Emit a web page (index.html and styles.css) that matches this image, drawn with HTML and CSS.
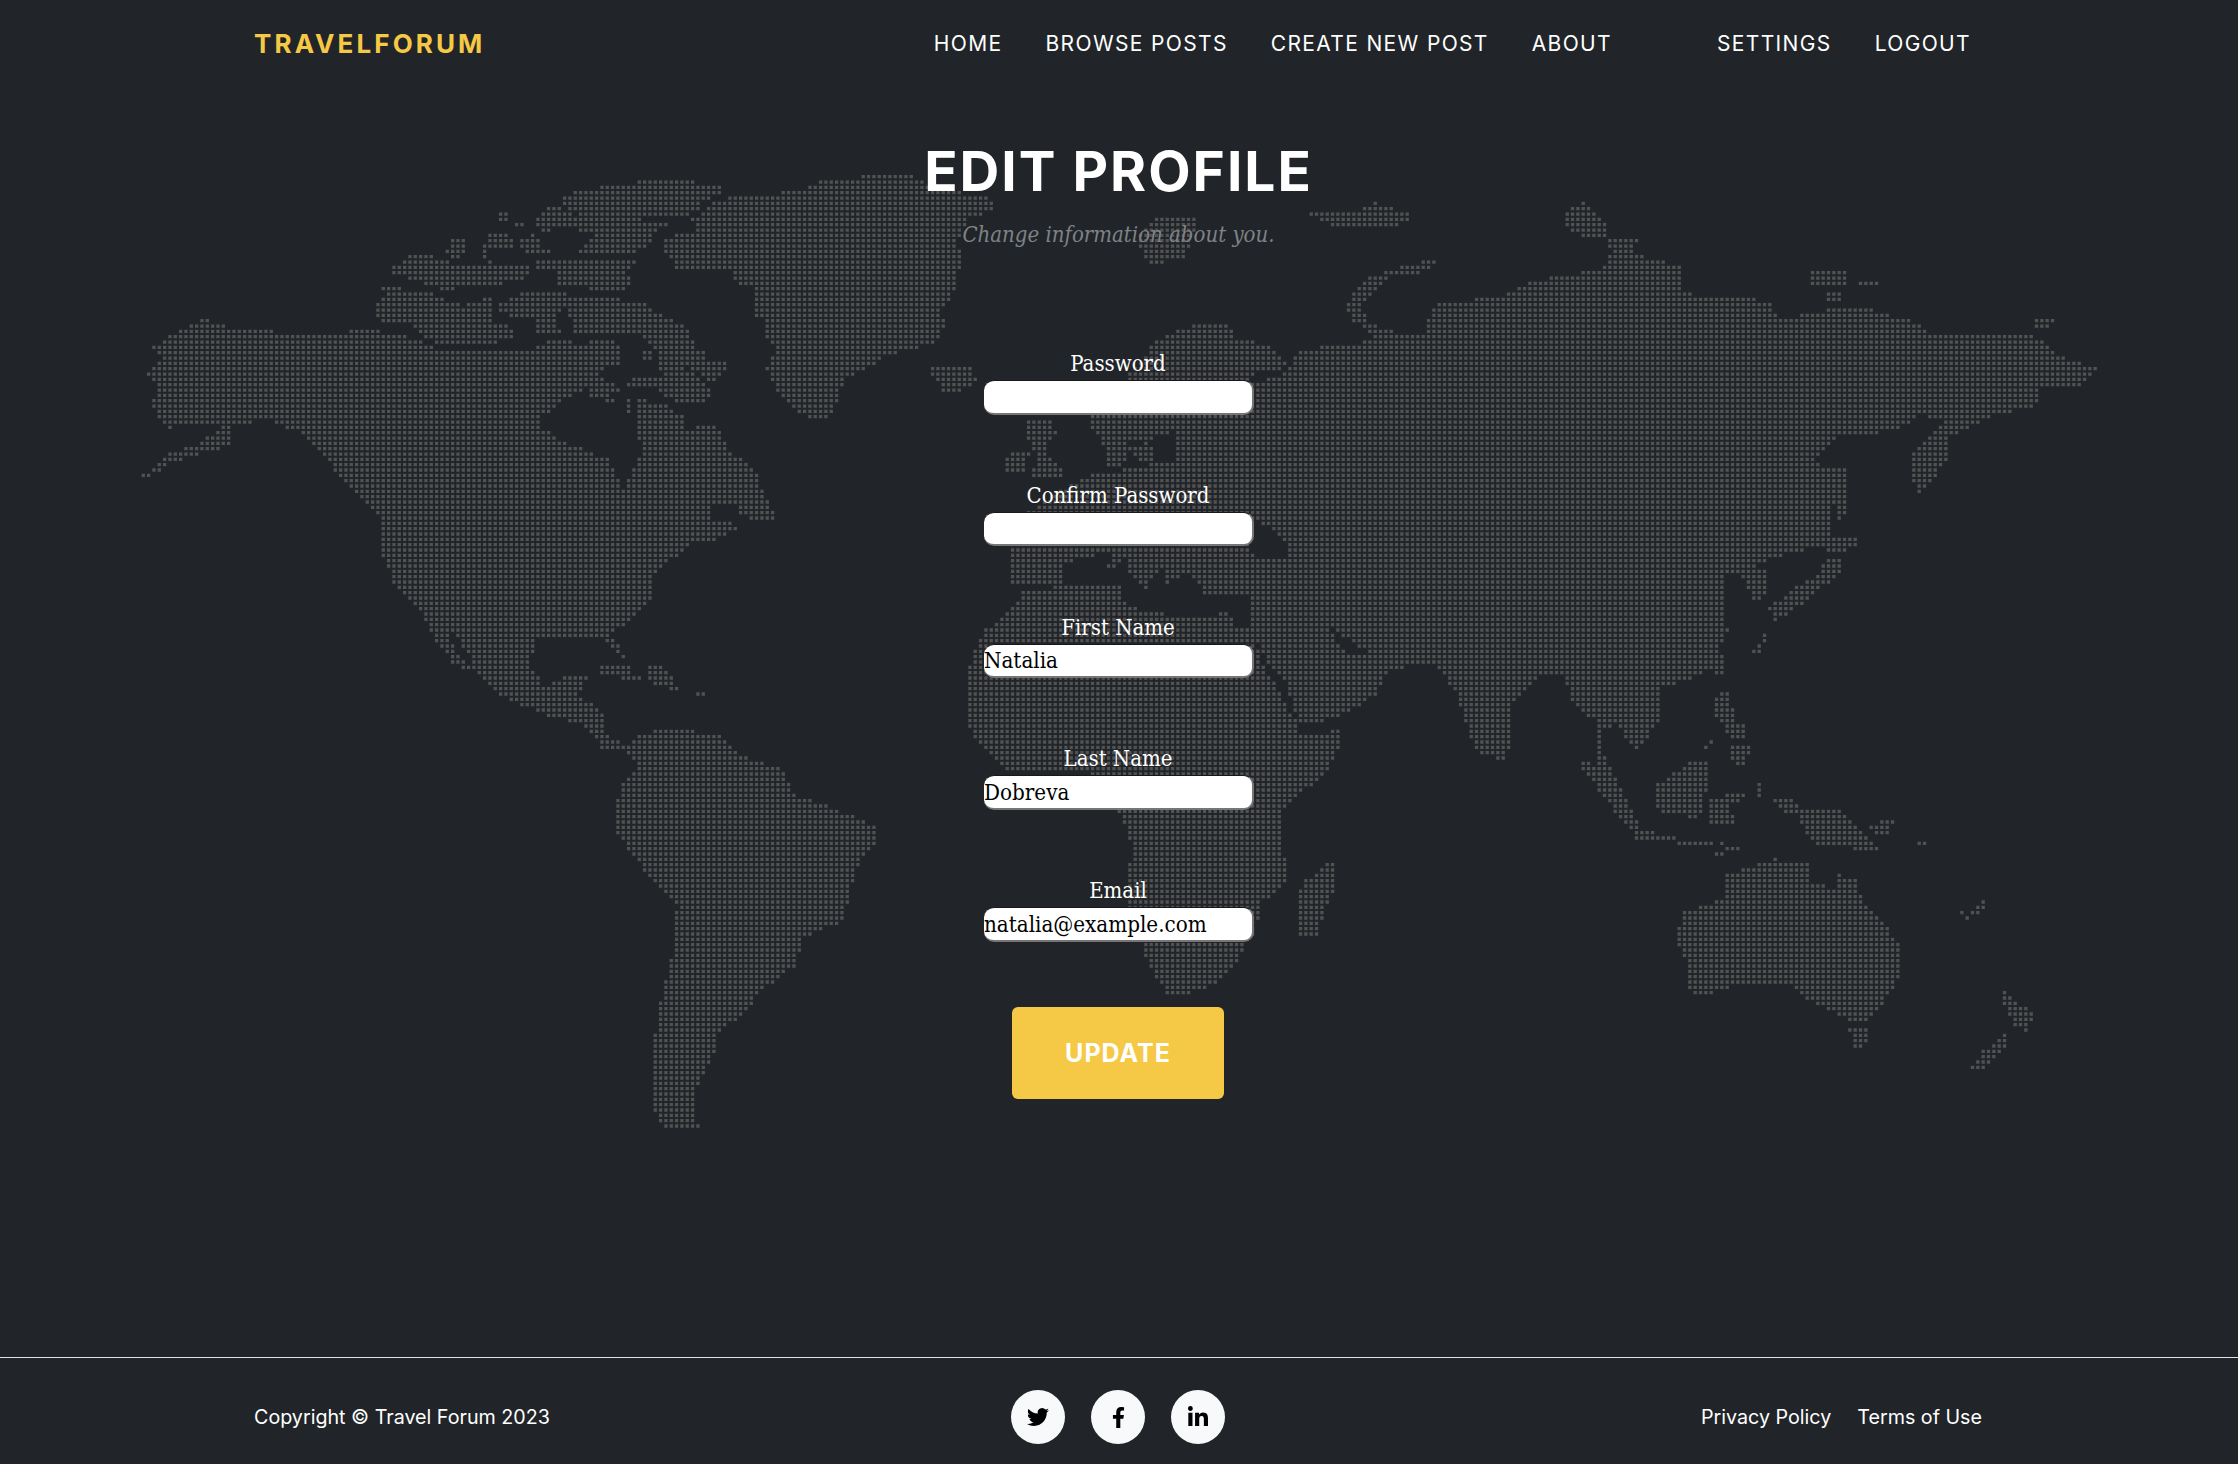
FILE: index.html
```html
<!DOCTYPE html>
<html lang="en">
<head>
<meta charset="utf-8">
<title>Edit Profile - Travel Forum</title>
<link rel="stylesheet" href="styles.css">
</head>
<body>
<svg class="world-map" id="world-map" width="2238" height="1464" viewBox="0 0 2238 1464" aria-hidden="true"><path id="world-dots" class="world-dots"></path></svg>
<header class="site-header">
  <a class="brand" href="#">TRAVELFORUM</a>
  <nav class="nav">
    <div class="nav-group">
      <a href="#">HOME</a>
      <a href="#">BROWSE POSTS</a>
      <a href="#">CREATE NEW POST</a>
      <a href="#">ABOUT</a>
    </div>
    <div class="nav-group">
      <a href="#">SETTINGS</a>
      <a href="#">LOGOUT</a>
    </div>
  </nav>
</header>
<main class="content">
  <h1 class="title">EDIT PROFILE</h1>
  <p class="subtitle">Change information about you.</p>
  <form class="profile-form">
    <div class="field"><label for="password">Password</label><input id="password" type="password"></div>
    <div class="field"><label for="confirm">Confirm Password</label><input id="confirm" type="password"></div>
    <div class="field"><label for="first">First Name</label><input id="first" type="text" value="Natalia"></div>
    <div class="field"><label for="last">Last Name</label><input id="last" type="text" value="Dobreva"></div>
    <div class="field"><label for="email">Email</label><input id="email" type="text" value="natalia@example.com"></div>
    <button class="submit" type="button">UPDATE</button>
  </form>
</main>
<footer class="site-footer">
  <div class="footer-inner">
    <p class="copyright">Copyright © Travel Forum 2023</p>
    <div class="socials">
      <a class="social" href="#" aria-label="Twitter"><svg class="icon-tw" viewBox="0 0 24 24"><path d="M23.953 4.57a10 10 0 01-2.825.775 4.958 4.958 0 002.163-2.723c-.951.555-2.005.959-3.127 1.184a4.92 4.92 0 00-8.384 4.482C7.69 8.095 4.067 6.13 1.64 3.162a4.822 4.822 0 00-.666 2.475c0 1.71.87 3.213 2.188 4.096a4.904 4.904 0 01-2.228-.616v.06a4.923 4.923 0 003.946 4.827 4.996 4.996 0 01-2.212.085 4.936 4.936 0 004.604 3.417 9.867 9.867 0 01-6.102 2.105c-.39 0-.779-.023-1.17-.067a13.995 13.995 0 007.557 2.209c9.053 0 13.998-7.496 13.998-13.985 0-.21 0-.42-.015-.63A9.935 9.935 0 0024 4.59z"/></svg></a>
      <a class="social" href="#" aria-label="Facebook"><svg class="icon-fb" viewBox="0 0 320 512"><path d="M279.14 288l14.22-92.66h-88.91v-60.13c0-25.35 12.42-50.06 52.24-50.06h40.42V6.26S260.43 0 225.36 0c-73.22 0-121.08 44.38-121.08 124.72v70.62H22.89V288h81.39v224h100.17V288z"/></svg></a>
      <a class="social" href="#" aria-label="LinkedIn"><svg class="icon-in" viewBox="0 0 448 512"><path d="M100.28 448H7.4V148.9h92.88zM53.79 108.1C24.09 108.1 0 83.5 0 53.8a53.79 53.79 0 0 1 107.58 0c0 29.7-24.1 54.3-53.79 54.3zM447.9 448h-92.68V302.4c0-34.7-.7-79.2-48.29-79.2-48.29 0-55.69 37.7-55.69 76.7V448h-92.78V148.9h89.08v40.8h1.3c12.4-23.5 42.69-48.3 87.88-48.3 94 0 111.28 61.9 111.28 142.3V448z"/></svg></a>
    </div>
    <div class="legal"><a href="#">Privacy Policy</a><a href="#">Terms of Use</a></div>
  </div>
</footer>
<script src="map.js"></script>
</body>
</html>
```
FILE: styles.css
```css
* { box-sizing: border-box; }
html, body { margin: 0; padding: 0; }
body {
  position: relative;
  min-height: 1464px;
  display: flex;
  flex-direction: column;
  background: #212529;
  color: #fff;
  font-family: Inter, "Liberation Sans", sans-serif;
  overflow: hidden;
}
a { color: inherit; text-decoration: none; }

.world-map { position: absolute; left: 0; top: 0; z-index: 0; filter: blur(0.45px); }
.world-dots { fill: #525252; }

.site-header, .content, .site-footer { position: relative; z-index: 1; }

.site-header {
  display: flex;
  align-items: center;
  height: 86px;
  padding: 0 267px 0 254px;
}
.brand {
  color: #f5c945;
  font-size: 26px;
  font-weight: 700;
  letter-spacing: 3.1px;
}
.nav {
  margin-left: auto;
  display: flex;
  gap: 105px;
  font-size: 21px;
  letter-spacing: 1.35px;
  font-weight: 400;
}
.nav-group { display: flex; gap: 43px; }

.content {
  flex: 1;
  display: flex;
  flex-direction: column;
  align-items: center;
}
.title {
  margin: 53px 1px 0 0;
  font-size: 55px;
  line-height: 64px;
  font-weight: 700;
  letter-spacing: 2px;
}
.subtitle {
  margin: 16px 1px 0 0;
  font-family: "DejaVu Serif Condensed", "DejaVu Serif", serif;
  font-stretch: condensed;
  font-style: italic;
  font-size: 22px;
  line-height: 32px;
  color: #7f8286;
}
.profile-form {
  width: 270px;
  margin-top: 96px;
  display: flex;
  flex-direction: column;
  align-items: flex-start;
  font-family: "DejaVu Serif Condensed", "DejaVu Serif", serif;
  font-stretch: condensed;
}
.field {
  width: 100%;
  height: 131.75px;
  display: flex;
  flex-direction: column;
  align-items: center;
}
.field label { font-size: 22px; line-height: 33px; margin-right: 2px; }
.field input {
  width: 100%;
  height: 34.5px;
  padding: 0;
  border-style: solid;
  border-width: 1px 2px 2px 0;
  border-color: #16181b #767676 #767676;
  border-radius: 10px;
  background: #fff;
  color: #000;
  font: inherit;
  font-size: 22.2px;
  outline: none;
}
.submit {
  width: 212px;
  height: 92px;
  margin: 1px 0 0 28px;
  border: 0;
  border-radius: 6px;
  background: #f5c945;
  color: #fff;
  font-family: Inter, "Liberation Sans", sans-serif;
  font-size: 25px;
  font-weight: 700;
  letter-spacing: 1px;
}

.site-footer { border-top: 1px solid #dee2e6; height: 107px; }
.footer-inner {
  height: 100%;
  padding: 12px 256px 0 254px;
  display: grid;
  grid-template-columns: 1fr auto 1fr;
  align-items: center;
  font-size: 19.7px;
}
.copyright { margin: 0; }
.socials { display: flex; gap: 26px; }
.social {
  width: 54px;
  height: 54px;
  border-radius: 50%;
  background: #f8f9fa;
  display: flex;
  align-items: center;
  justify-content: center;
}
.social svg { fill: #000; display: block; }
.icon-tw { width: 22px; height: 22px; }
.icon-fb { width: 13px; height: 21px; }
.icon-in { width: 20px; height: 23px; }
.legal { display: flex; justify-content: flex-end; gap: 26px; }
```
FILE: map.js
```js
// Dotted world map: land outlines traced per region, rasterised onto a 5.33px dot grid.
var PITCH = 5.333, DOT = 3.3, OX = 159.3, OY = 320.7;

// Each region: origin, scale, polygons as flat x,y lists.
var LAND = [
  { o: [130, 170], s: [1.568, 1.6], p: [
    // North America
    [28,328,50,300,38,285,70,262,120,240,150,252,210,258,265,268,310,268,361,256,431,267,482,288,617,293,661,272,713,280,757,277,764,309,719,320,716,347,668,373,645,395,645,416,693,443,751,464,757,490,777,512,796,464,802,453,796,373,834,373,866,397,869,421,905,405,927,421,937,448,985,485,988,512,1010,550,1005,565,960,550,955,530,915,530,910,560,945,565,950,575,910,595,880,590,860,615,835,630,815,660,815,690,780,725,750,740,770,770,775,785,760,770,745,745,640,745,625,790,650,830,680,815,720,810,700,840,745,870,745,900,775,925,740,925,720,890,670,875,640,865,590,845,550,810,510,780,480,750,460,710,420,670,395,610,395,560,360,520,330,490,300,450,270,420,210,395,160,410,160,440,110,450,60,470,15,495,60,455,100,445,130,425,150,405,60,410,35,380,50,345],
    // South America
    [775,925,800,905,850,895,920,905,960,940,1020,960,1040,1000,1120,1030,1165,1050,1165,1080,1140,1110,1115,1200,1050,1230,1045,1270,980,1320,960,1355,925,1370,915,1410,880,1480,880,1525,900,1535,840,1535,820,1500,820,1430,830,1340,850,1270,860,1180,800,1110,760,1050,770,990,800,950],
    // Caribbean and Baja
    [735,796,780,796,795,812,865,835,820,818,735,806],[815,795,835,795,850,810,850,830,815,818],[885,838,900,838,900,843,885,843],
    [470,725,490,740,525,795,510,790,480,750]
  ]},
  { o: [360, 170], s: [2.45, 3], p: [
    // Greenland
    [885,90,1035,75,1040,60,1090,60,1100,45,1190,30,1300,15,1340,10,1380,40,1430,60,1550,90,1550,120,1490,140,1475,170,1460,215,1470,275,1455,350,1440,395,1420,420,1430,470,1415,510,1350,535,1285,550,1265,575,1190,620,1175,665,1150,735,1135,750,1075,730,1030,670,1000,600,1020,530,995,500,1000,440,970,435,965,340,925,335,915,300,780,295,770,265,740,240,755,205,810,190,835,165,810,155,835,130],
    // Arctic archipelago
    [635,45,760,30,855,45,895,60,870,75,830,100,825,125,760,135,625,135,530,130,490,95,505,75,570,60],
    [430,155,450,120,490,110,520,140,620,150,760,155,730,180,700,225,670,245,560,250,540,240,580,190,520,170,440,180],
    [345,125,365,125,365,150,345,150],[385,155,405,155,405,165,385,165],
    [220,205,260,205,260,230,240,260,215,260],
    [120,255,180,255,180,265,240,290,420,285,400,325,310,345,180,345,130,325,80,310,80,290,110,280],
    [320,190,375,205,380,230,310,240,305,265,320,275,305,235],[400,205,425,195,445,235,470,240,400,240],
    [430,265,680,270,660,295,600,300,430,290],
    [480,310,650,300,660,345,640,360,480,345],
    [50,352,100,352,100,360,50,360],[195,352,235,352,235,360,195,360],
    [65,368,165,368,215,400,250,410,320,385,320,450,380,485,360,510,200,525,160,500,130,460,70,460,40,440,40,415],
    [345,400,410,370,510,370,510,400,470,440,370,440,345,420],
    [435,445,470,445,495,495,440,490],
    [515,385,630,385,650,410,690,400,720,430,765,450,810,490,815,530,845,550,855,575,900,580,895,600,860,635,830,600,810,590,730,600,740,550,680,490,530,490,515,440],
    [660,630,730,625,760,600,815,610,855,660,855,685,830,700,755,685,730,650,660,650],
    [560,510,630,520,630,580,570,600,610,640,640,665,570,680,555,650],
    [690,545,710,545,710,570,690,570],[595,695,620,695,620,703,595,703],[650,695,660,695,660,720,650,720],[680,695,700,695,700,703,680,703],
    // Iceland
    [1410,580,1420,595,1495,595,1510,630,1450,670,1430,660,1410,625,1395,600]
  ]},
  { o: [940, 300], s: [3, 3], p: [
    // Scandinavia
    [560,240,645,130,720,90,820,65,870,80,880,115,990,140,1035,180,1020,215,950,215,900,250,830,300,760,350,720,360,680,400,640,400,620,430,540,410,480,410,455,380,455,350,560,340],
    [490,415,560,420,550,490,500,490],[570,440,640,440,640,478,590,478],
    // British Isles
    [265,370,335,370,345,410,310,430,330,480,380,520,270,540,300,470,260,410],[210,450,265,455,255,520,195,520],
    // Continental Europe
    [210,750,260,640,430,535,560,510,700,485,725,400,800,400,800,700,830,760,830,880,800,880,760,800,680,790,660,800,620,860,570,820,565,770,530,790,490,815,530,750,415,770,365,800,360,850,215,850],
    // Middle East
    [930,880,940,980,960,1040,975,1070,1000,1120,1050,1210,1075,1275,1160,1255,1215,1235,1300,1185,1340,1120,1290,1090,1270,1070,1240,1075,1500,1075,1500,800,930,800]
  ]},
  { o: [940, 640], s: [3, 3], p: [
    // Africa
    [250,-140,400,-165,540,-155,550,-110,600,-90,700,-70,810,-65,860,-85,880,-40,940,-40,955,60,1000,130,1055,240,1075,285,1110,295,1195,270,1195,320,1150,400,1080,460,1020,510,1020,600,1035,680,1030,730,960,790,945,870,910,920,870,990,800,1045,690,1065,650,1010,610,920,570,790,570,690,585,620,550,540,530,500,440,390,350,395,200,395,140,320,100,285,80,220,95,110,80,110,130,-20,200,-80],
    // Madagascar
    [1170,665,1182,665,1182,750,1150,810,1130,885,1075,885,1075,810,1090,730,1140,700]
  ]},
  { o: [1130, 170], s: [1.568, 1.6], p: [
    // Eurasia
    [265,295,300,285,350,280,430,265,460,265,480,215,580,205,630,180,740,160,800,145,860,155,865,195,900,205,1000,210,1020,240,1095,225,1160,225,1230,245,1260,265,1350,265,1415,265,1460,300,1515,320,1490,345,1425,345,1420,375,1340,395,1285,400,1240,390,1200,415,1110,425,1060,470,1095,475,1095,560,1100,600,1060,605,1000,620,965,640,1000,640,1000,680,980,685,960,645,925,640,935,740,920,770,925,790,880,810,825,830,830,880,795,925,760,885,735,895,740,930,795,1050,770,1030,745,980,730,950,730,880,700,860,680,810,640,810,600,850,590,945,545,930,510,830,480,790,440,790,405,800,380,835,330,860,260,885,240,800,190,735,188,678,120,678,95,640,57,660,50,600,78,400,90,350,160,340,235,336],
    // Arctic islands
    [340,215,370,175,430,155,480,145,465,160,410,170,360,215,375,245,400,255,440,270,390,270,350,240],
    [270,65,310,70,345,70,385,55,445,75,415,90,325,90,300,78],
    [40,75,105,80,95,110,85,140,30,150,20,130,15,100,30,90],
    [680,70,710,55,745,85,750,115,795,115,785,135,860,155,860,165,740,160,760,130,745,110,690,100],
    [1065,165,1125,160,1125,185,1065,180],[1140,175,1180,180,1140,185],[1090,195,1115,195,1115,210,1095,210],[1420,240,1450,240,1445,248,1420,248],
    // Kamchatka, Sakhalin, Japan
    [1285,400,1345,395,1285,425,1280,465,1240,515,1225,490,1230,450],
    [1105,475,1120,480,1125,540,1110,560,1105,530],
    [1090,620,1110,625,1110,650,1080,670,1060,690,1010,720,1005,700,1040,670,1085,650],[1095,590,1135,590,1135,605,1090,610],
    [995,745,1000,745,985,772,978,772],[920,780,935,780,930,810,920,805],
    // Philippines, Indonesia, New Guinea
    [920,840,940,840,945,885,965,890,965,905,945,910,920,875],[940,925,975,925,960,955,940,940],[895,930,910,910,914,914,899,934],
    [705,950,725,950,800,1050,780,1050,735,990],[790,1060,855,1065,850,1075,790,1070],[855,1072,915,1075,910,1080,855,1078],
    [825,985,880,950,905,950,900,1000,890,1035,830,1025],[905,1010,965,995,940,1020,945,1045,915,1050],[985,980,992,980,992,1005,980,1005],[920,1075,960,1085,920,1095,945,1080],
    [1010,1005,1040,1010,1060,1025,1110,1025,1150,1065,1175,1090,1150,1085,1100,1080,1070,1075,1045,1030,1015,1020],[1160,1050,1195,1040,1190,1060,1165,1060],[1235,1075,1245,1075,1245,1078,1235,1078],
    // Australia, Tasmania, New Zealand, New Caledonia
    [865,1190,935,1165,935,1130,1010,1105,1060,1110,1060,1140,1105,1150,1110,1130,1140,1135,1145,1170,1205,1235,1205,1290,1175,1340,1145,1365,1100,1345,1050,1320,1040,1300,960,1300,900,1320,880,1315,875,1270,860,1240],
    [1130,1375,1160,1375,1150,1405,1135,1405],
    [1370,1315,1390,1335,1415,1350,1405,1375,1390,1370,1375,1345],[1370,1380,1380,1390,1340,1435,1320,1440,1340,1410],
    [1295,1178,1310,1195,1340,1170,1335,1185,1310,1200]
  ]}
];

var WATER = [
  { o: [130, 170], s: [1.568, 1.6], p: [
    [495,735,512,745,540,790,528,795,505,760]
  ]},
  { o: [1130, 170], s: [1.568, 1.6], p: [
    [190,558,215,570,245,600,245,625,210,625,190,610],
    [305,730,320,735,375,775,345,775],
    [215,790,240,810,262,880,250,870]
  ]}
];

function toPolys(groups) {
  var out = [];
  groups.forEach(function (g) {
    g.p.forEach(function (flat) {
      var pts = [];
      for (var i = 0; i < flat.length; i += 2) {
        pts.push([g.o[0] + flat[i] / g.s[0], g.o[1] + flat[i + 1] / g.s[1]]);
      }
      var xs = pts.map(function (q) { return q[0]; });
      var ys = pts.map(function (q) { return q[1]; });
      out.push({ pts: pts, x0: Math.min.apply(0, xs), x1: Math.max.apply(0, xs), y0: Math.min.apply(0, ys), y1: Math.max.apply(0, ys) });
    });
  });
  return out;
}

function inside(poly, x, y) {
  if (x < poly.x0 || x > poly.x1 || y < poly.y0 || y > poly.y1) return false;
  var pts = poly.pts, hit = false;
  for (var i = 0, j = pts.length - 1; i < pts.length; j = i++) {
    var a = pts[i], b = pts[j];
    if ((a[1] > y) !== (b[1] > y) && x < (b[0] - a[0]) * (y - a[1]) / (b[1] - a[1]) + a[0]) hit = !hit;
  }
  return hit;
}

function inAny(polys, x, y) {
  for (var i = 0; i < polys.length; i++) if (inside(polys[i], x, y)) return true;
  return false;
}

var land = toPolys(LAND), water = toPolys(WATER), d = [];
var T = 1.4;
for (var row = -30; row < 160; row++) {
  var y = OY + row * PITCH;
  for (var col = -4; col < 370; col++) {
    var x = OX + col * PITCH;
    if (inAny(water, x, y)) continue;
    if (inAny(land, x, y) || inAny(land, x - T, y) || inAny(land, x + T, y) || inAny(land, x, y - T) || inAny(land, x, y + T)) {
      d.push('M' + (x - DOT / 2).toFixed(2) + ' ' + (y - DOT / 2).toFixed(2) + 'h' + DOT + 'v' + DOT + 'h-' + DOT + 'z');
    }
  }
}
document.getElementById('world-dots').setAttribute('d', d.join(''));
```
